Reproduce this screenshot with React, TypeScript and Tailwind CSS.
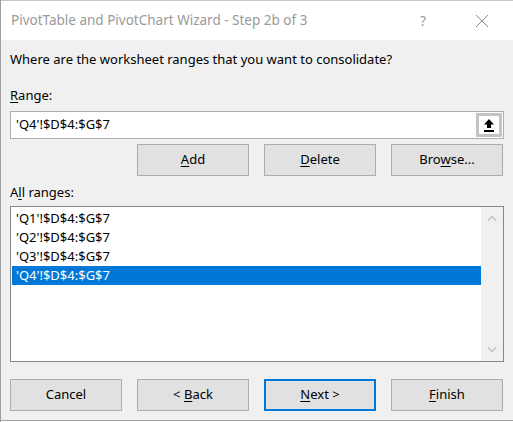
import { useState } from 'react'

const ranges = ["'Q1'!$D$4:$G$7", "'Q2'!$D$4:$G$7", "'Q3'!$D$4:$G$7", "'Q4'!$D$4:$G$7"]

function Btn({ children, primary = false }: { children: React.ReactNode; primary?: boolean }) {
  return (
    <button
      className={
        'w-[112px] h-[32px] bg-[#e1e1e1] text-[13px] text-black flex items-center justify-center ' +
        (primary ? 'border-2 border-[#0078d7]' : 'border border-[#adadad]')
      }
    >
      {children}
    </button>
  )
}

export default function App() {
  const [selected, setSelected] = useState(3)

  return (
    <div
      className="w-[513px] h-[422px] bg-[#f0f0f0] flex flex-col border-l border-[#a0a0a0] overflow-hidden"
      style={{ fontFamily: '"Noto Sans", "Open Sans", sans-serif' }}
    >
      {/* title bar */}
      <div className="h-[40px] bg-white border-t border-[#c8c8c8] flex items-center pl-[10px] shrink-0">
        <span className="text-[13.5px] text-[#9a9a9a] flex-1">PivotTable and PivotChart Wizard - Step 2b of 3</span>
        <span className="text-[14px] text-[#9a9a9a] w-[20px] text-center mr-[42px]">?</span>
        <svg width="14" height="14" viewBox="0 0 14 14" className="mr-[24px]">
          <path d="M1 1L13 13M13 1L1 13" stroke="#8a8a8a" strokeWidth="1" />
        </svg>
      </div>

      <div className="flex-1 flex flex-col px-[9px] text-[13px] text-black">
        <div className="mt-[9px] h-[20px] leading-[20px]">Where are the worksheet ranges that you want to consolidate?</div>
        <div className="mt-[16px] h-[20px] leading-[20px]">
          <span className="underline underline-offset-2">R</span>ange:
        </div>

        {/* range input */}
        <div className="mt-[6px] h-[28px] w-[494px] bg-white border border-[#adadad] flex items-center">
          <span className="flex-1 pl-[5px]">{ranges[selected]}</span>
          <div className="w-[26px] h-[24px] mr-[1px] border-[3px] border-[#c4c4c4] bg-white flex items-center justify-center">
            <svg width="12" height="14" viewBox="0 0 12 14">
              <path d="M6 1L1 6.5H4V10H8V6.5H11Z" fill="#000" />
              <rect x="1" y="12" width="10" height="2" fill="#000" />
            </svg>
          </div>
        </div>

        <div className="mt-[5px] w-[494px] flex justify-end gap-[15px] pr-[1px]">
          <Btn><span><span className="underline underline-offset-2">A</span>dd</span></Btn>
          <Btn><span><span className="underline underline-offset-2">D</span>elete</span></Btn>
          <Btn><span>Bro<span className="underline underline-offset-2">w</span>se...</span></Btn>
        </div>

        <div className="mt-[6px] h-[20px] leading-[20px]">
          A<span className="underline underline-offset-2">l</span>l ranges:
        </div>

        {/* list box */}
        <div className="mt-[4px] h-[156px] w-[494px] bg-white border border-[#828790] flex">
          <div className="flex-1 pt-[2px] pl-[1px]">
            {ranges.map((r, i) => (
              <div
                key={r}
                onClick={() => setSelected(i)}
                className={
                  'h-[19px] leading-[19px] pl-[4px] ' + (i === selected ? 'bg-[#0078d7] text-white' : '')
                }
              >
                {r}
              </div>
            ))}
          </div>
          <div className="w-[22px] bg-[#f0f0f0] flex flex-col justify-between items-center py-[8px]">
            <svg width="10" height="6" viewBox="0 0 10 6">
              <path d="M1 5.5L5 1.5L9 5.5" stroke="#c2c2c2" strokeWidth="1.5" fill="none" />
            </svg>
            <svg width="10" height="6" viewBox="0 0 10 6">
              <path d="M1 0.5L5 4.5L9 0.5" stroke="#c2c2c2" strokeWidth="1.5" fill="none" />
            </svg>
          </div>
        </div>

        <div className="mt-[17px] flex gap-[15px]">
          <Btn>Cancel</Btn>
          <Btn><span>&lt; <span className="underline underline-offset-2">B</span>ack</span></Btn>
          <Btn primary><span><span className="underline underline-offset-2">N</span>ext &gt;</span></Btn>
          <Btn><span><span className="underline underline-offset-2">F</span>inish</span></Btn>
        </div>
      </div>
      <div className="h-[2px] border-t border-[#a0a0a0] bg-white shrink-0" />
    </div>
  )
}
